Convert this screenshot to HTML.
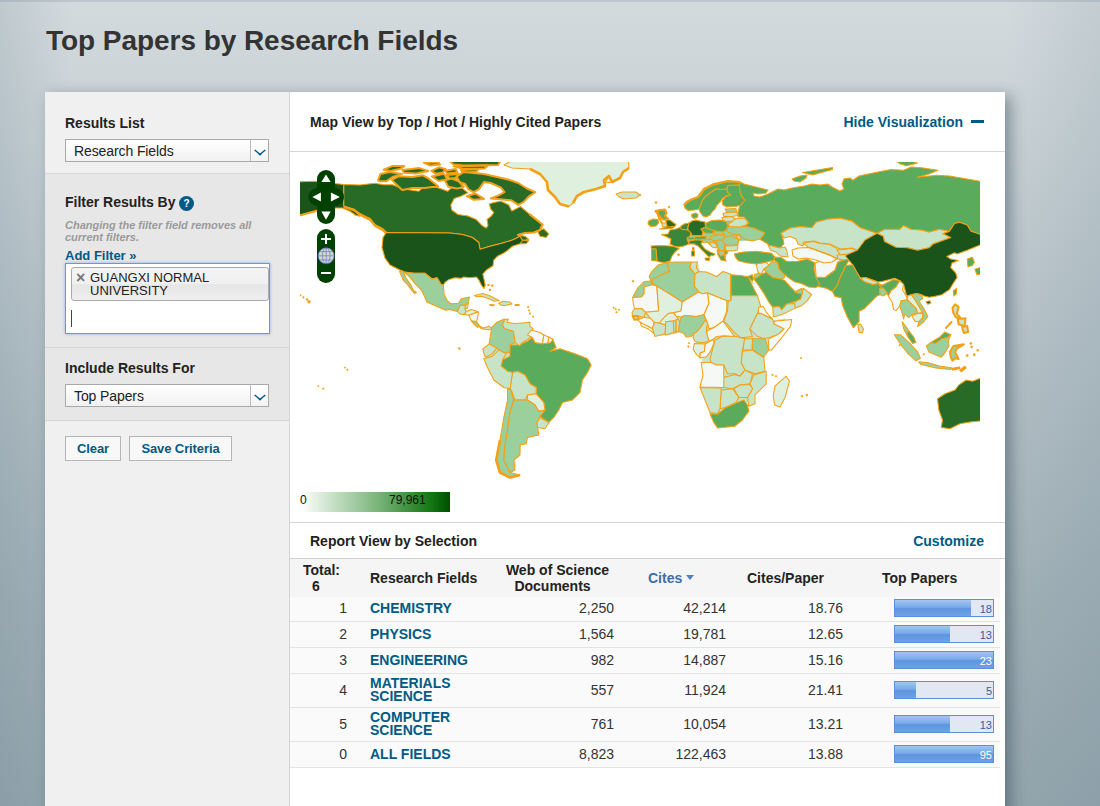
<!DOCTYPE html>
<html lang="en">
<head>
<meta charset="utf-8">
<title>Top Papers by Research Fields</title>
<style>
*{box-sizing:border-box;}
html,body{margin:0;padding:0;}
body{width:1100px;height:806px;overflow:hidden;position:relative;font-family:"Liberation Sans",Arial,sans-serif;color:#333;
 background:linear-gradient(to bottom,#d3dadd 0px,#c9d2d6 120px,#b4c0c6 350px,#a0afb6 600px,#93a4ac 806px);}
body:before{content:"";position:absolute;left:0;top:0;width:1100px;height:806px;background:linear-gradient(to right,rgba(110,135,150,.20) 0,rgba(110,135,150,0) 70px,rgba(110,135,150,0) 1010px,rgba(110,135,150,.16) 1100px);}
body:after{content:"";position:absolute;left:0;top:0;width:1100px;height:2px;background:rgba(90,110,125,.18);}
h1{position:absolute;left:46px;top:24px;margin:0;font-size:28px;line-height:34px;font-weight:bold;color:#333;white-space:nowrap;letter-spacing:-0.05px;}
#panel{position:absolute;left:45px;top:92px;width:960px;height:760px;background:#fff;box-shadow:6px 4px 14px rgba(40,60,75,.45);}
#side{position:absolute;left:0;top:0;width:245px;height:760px;background:#f0f0f0;border-right:1px solid #d4d4d4;}
.sec{position:absolute;left:0;width:244px;}
.lbl{position:absolute;left:20px;font-size:14px;font-weight:bold;color:#222;white-space:nowrap;line-height:16px;}
.sel{position:absolute;left:20px;width:204px;height:23px;border:1px solid #a9a9a9;background:linear-gradient(#fff,#f1f1f1);font-size:14px;line-height:23px;padding-left:8px;color:#222;letter-spacing:-0.1px;}
.sel i{position:absolute;right:0;top:0;width:18px;height:21px;border-left:1px solid #bbb;background:linear-gradient(#fff,#f3f3f3);}
.sel i svg{position:absolute;left:3px;top:9px;}
.btn{position:absolute;top:344px;height:25px;border:1px solid #b5b5b5;background:#f8f8f8;color:#005a84;font-size:13px;font-weight:bold;letter-spacing:-0.1px;line-height:24px;text-align:center;}
a{color:#005a84;text-decoration:none;}
#main{position:absolute;left:245px;top:0;width:715px;height:760px;}
.hd{position:absolute;left:20px;font-size:14px;font-weight:bold;color:#222;line-height:16px;white-space:nowrap;}
.hr{position:absolute;left:0;width:715px;height:1px;background:#d6d6d6;}
.lnk{position:absolute;font-size:14px;font-weight:bold;color:#005a84;line-height:16px;white-space:nowrap;}
table{position:absolute;left:0;top:467px;width:710px;border-collapse:collapse;font-size:14px;}
th{background:#f5f5f5;font-weight:bold;color:#222;height:38px;padding:0;line-height:16px;vertical-align:middle;}
td{background:#fafafa;border-bottom:1px solid #e3e3e3;padding:0;color:#333;vertical-align:middle;line-height:13px;}
td.n{text-align:right;padding-right:1px;}
td.f a{font-weight:bold;color:#005a84;}
.bar{position:relative;width:100px;height:18px;border:1px solid #5b8fd6;background:#e1e7f3;margin-left:50px;}
.bar b{position:absolute;left:0;top:0;bottom:0;background:linear-gradient(#a3c5f2 0%,#78a9e9 46%,#5e94de 54%,#6fa2e6 100%);}
.bar span{position:absolute;right:1px;top:2px;font-size:11px;line-height:14px;color:#3c5a9a;}
.bar span.w{color:#fff;}
</style>
</head>
<body>
<h1>Top Papers by Research Fields</h1>
<div id="panel">
 <div id="side">
  <div class="sec" style="top:81px;height:175px;background:#e7e7e7;border-top:1px solid #d6d6d6;border-bottom:1px solid #d6d6d6;"></div>
  <div class="sec" style="top:256px;height:73px;background:#e7e7e7;border-bottom:1px solid #d6d6d6;"></div>
  <div class="lbl" style="top:23px;">Results List</div>
  <div class="sel" style="top:47px;">Research Fields<i><svg width="12" height="7" viewBox="0 0 12 7"><path d="M0.7 1 Q3.5 3.2 6 5.6 Q8.5 3.2 11.3 1" fill="none" stroke="#005a84" stroke-width="1.5"/></svg></i></div>
  <div class="lbl" style="top:102px;">Filter Results By</div>
  <div style="position:absolute;left:134px;top:104px;width:15px;height:15px;border-radius:50%;background:#005a84;color:#fff;font-size:10px;font-weight:bold;line-height:15px;text-align:center;">?</div>
  <div style="position:absolute;left:20px;top:127px;font-size:11px;line-height:12px;font-style:italic;font-weight:bold;color:#9a9a9a;white-space:nowrap;">Changing the filter field removes all<br>current filters.</div>
  <a style="position:absolute;left:20px;top:156px;font-size:13px;line-height:16px;font-weight:bold;white-space:nowrap;">Add Filter »</a>
  <div style="position:absolute;left:20px;top:171px;width:205px;height:71px;background:#fff;border:1px solid #5b9bf0;box-shadow:0 0 3px rgba(80,140,240,.6);">
    <div style="position:absolute;left:5px;top:3px;width:198px;height:34px;border:1px solid #aaa;border-radius:3px;background:linear-gradient(#f4f4f4 0%,#f0f0f0 50%,#e6e6e6 52%,#eee 100%);font-size:13px;line-height:13px;color:#222;padding:3px 0 0 18px;">GUANGXI NORMAL<br>UNIVERSITY<span style="position:absolute;left:4px;top:3px;font-size:16px;line-height:14px;font-weight:bold;color:#777;">×</span></div>
    <div style="position:absolute;left:5px;top:46px;width:1px;height:17px;background:#444;"></div>
  </div>
  <div class="lbl" style="top:268px;">Include Results For</div>
  <div class="sel" style="top:292px;">Top Papers<i><svg width="12" height="7" viewBox="0 0 12 7"><path d="M0.7 1 Q3.5 3.2 6 5.6 Q8.5 3.2 11.3 1" fill="none" stroke="#005a84" stroke-width="1.5"/></svg></i></div>
  <div class="btn" style="left:20px;width:56px;">Clear</div>
  <div class="btn" style="left:84px;width:103px;">Save Criteria</div>
 </div>
 <div id="main">
  <div class="hd" style="top:22px;">Map View by Top / Hot / Highly Cited Papers</div>
  <div class="lnk" style="right:42px;top:22px;">Hide Visualization</div>
  <div style="position:absolute;left:681px;top:28px;width:13px;height:3px;background:#005a84;"></div>
  <div class="hr" style="top:59px;"></div>
  <!--MAP-->
  <div id="map" style="position:absolute;left:10px;top:70px;width:680px;height:320px;overflow:hidden;"><svg width="680" height="320" viewBox="300 162 680 320" style="position:absolute;left:0;top:0;"><style>.k{fill:#1b541b}.d{fill:#276b27}.e{fill:#3a873a}.m{fill:#5aac5c}.l{fill:#9bd09c}.p{fill:#c8e4c8}.v{fill:#dff0df}.w{fill:#f5f8f5}#ctry path{stroke:#f3a014;stroke-width:1.05;stroke-linejoin:round}#ctry .tk{stroke-width:2}#ctry .ns{stroke:none}</style><g id="ctry"><path class="p ns" d="M494.7,331.9 498.3,327.2 506.5,323.6 515.9,327.2 530,327.2 539.4,335.5 551.1,341.4 554.7,349.7 558.2,350.9 572.3,355.7 584,360.4 587.6,366.3 584,373.5 579.3,380.6 577,392.5 569.9,399.6 560.5,402 557,409.1 552.3,416.2 547.6,421 544.1,426.9 537,425.7 538.2,432.8 527.6,435.2 526.5,441.2 520.6,442.3 520.6,451.8 514.7,456.6 515.9,466.1 511.2,473.2 501.8,468.5 498.3,456.6 501.8,437.6 505.3,416.2 508.8,399.6 508.8,388.9 495.9,380.6 490,368.7 486.5,360.4 486.5,350.9 493.6,347.3 493.6,337.8Z"/>
<path class="l ns" d="M682.1,226.5 692.4,222.1 706.5,223.6 717.8,222.1 725.3,222.5 728.1,220.2 736.6,218.3 742.2,218.3 746.9,223.6 762,233.1 757.3,238.8 749.8,240.7 738.5,240.7 736.6,248.7 727.2,252.1 725.3,259.7 719.7,254 716.9,248 710.7,244.9 705.6,242.6 704.3,239.2 691.5,238.8 688.7,241.7 672.7,244.5 672.7,238.8 665.2,235 675.5,231.2Z"/>
<path class="p ns" d="M654.5,280.1 666.3,267 672.1,265.8 677.7,265.8 693.5,264.6 698.9,264.6 700,273.2 701,272.9 710.5,275.5 718.6,279.1 724.2,275.5 730,276.5 742.8,277.7 750.9,275.3 752.3,280.8 755.8,285 750,282.7 753.5,291 757,298.1 759.3,308.8 764,313.5 769.8,320.7 786,318.3 784.9,325.4 775.6,339.7 766.3,349.2 764.9,348.9 760.2,356.1 761.4,369.1 762.6,381 752.1,391.7 752.1,400 746.3,402.4 746.3,407.1 740.5,415.4 733.5,421.4 717.2,423 713.7,417.8 710.3,409.5 705.6,396.4 701,384.6 703.7,372.7 702.1,360.8 702.1,356.1 696.3,348.9 695.1,343 696.3,342 694,334.9 687.2,334.9 681.9,332.5 669.8,334.9 659.3,336.1 652.1,332.5 644,323 640.5,318.3 637.7,311.2 640.5,306.4 639.3,298.1 643.1,292.2 648.6,285Z"/>
<path class="k" d="M294,182 315,181.2 343.8,184.5 343.8,206.2 353.8,210 360,216.2 356.2,215.5 350,211.2 342.5,208 335,208 325,210 315,211.2 294,217Z"/>
<path class="d" d="M343.8,184.5 360,185 375,183.2 383.8,184.8 392.5,184.8 404,189 418.8,191.2 423,187.5 436,187 447.8,191.2 453.5,186.2 462.2,188.2 468,192.8 460.8,196.2 454.2,198.5 450.8,205 451.8,210 458,214.5 468,216 476.2,219.5 482,225.5 486.2,228 488,225.5 487,219.5 491.2,216.2 493.8,212.5 490.5,208.8 489.5,203.8 496.2,202 501.2,201.2 508.8,205 511.8,211 520.5,206.5 529.2,213.8 536.2,219.5 542.5,224.5 540,230 533.8,232.5 525,233 517.5,235 525,236.2 528.8,239.5 522.5,240.5 520,236.2 512.5,240 500,243.8 490,246.2 480,249.2 478.8,242.5 472.5,237.5 462.5,234.5 450,233 386.2,232.5 382.5,228.8 375,225 370,218.8 364.5,216.2 360,213.8 353.8,209.2 343.8,206.2Z"/>
<path class="d" d="M537.5,231.2 543.8,228.8 548.8,233.8 546.2,237.5 540,236.2Z"/>
<path class="d" d="M517.5,240 528.8,240.5 526.2,243.8 520,243.8Z"/>
<path class="k" d="M386.2,232.5 450,233 462.5,234.5 472.5,237.5 478.8,242.5 480,249.2 490,246.2 500,243.8 512.5,240 520,236.2 522.5,240.5 520,243.8 512.5,246.2 507.5,250.5 503.8,253 497.5,256.2 493.8,260 493,265.8 486.5,270 482.8,274 484,279 485.2,285.2 484,288.5 481.5,285.2 479,280.2 476.5,277 470,277.8 463.8,277 461.2,278.2 454.8,277.8 448.5,279.8 445.2,282.2 443.2,285.2 440.8,284 437,277.8 432,279 425,273.2 414,273.2 404,272 398.8,269.5 390,265 385,258 382,247.5 383,237.5Z"/>
<path class="m" d="M889.5,156 901,156 917.5,163.2 906.2,165.8 899.8,163.8Z"/>
<path class="p" d="M877,233.2 884.5,229.2 899.8,229.2 903.5,225.5 911.2,229.2 921.5,230 929,232 939.2,229.2 949.5,231.2 943,233.8 950.8,237.5 933,244 929,247.8 917.5,250.2 907.5,247.8 896,247.2 884.5,241.5 883.2,236.2Z"/>
<path class="m" d="M817.5,286.2 816.2,277.5 825,277.5 835,270 837.5,262.5 846.2,258.8 849,260.2 846.2,265 843.8,270.2 840,277.8 837.5,285.2 832.5,291.5 826.2,288.2Z"/>
<path class="w" d="M815,263 827.5,258.8 838.8,258 847.5,255.2 837.5,262.5 835,270 825,277.5 816.2,277Z"/>
<path class="m" d="M510,345 518.8,345 527.5,341.2 532.5,337.5 535,342.5 540,343.8 550,342.5 552.5,338.8 556.2,347.5 550,351.2 560,348.8 575,353.8 587.5,358.8 591.2,365 587.5,372.5 582.5,380 580,392.5 572.5,400 562.5,402.5 558.8,410 553.8,417.5 548.8,422.5 540,416.2 545,410 543.8,402.5 536.2,395 536.2,387.5 530,383.8 525,375 517.5,371.2 512.5,372.5 507.5,371.2 501.2,366.2 502.5,360 510,356.2Z"/>
<path class="p" d="M512.5,372.5 517.5,371.2 525,375 530,383.8 536.2,387.5 536.2,393.8 527.5,395 525,400 515,400 511.2,390 510,388.8Z"/>
<path class="v" d="M527.5,395 536.2,393.8 543.8,402.5 545,410 538.8,411.2 535,405 527.5,400Z"/>
<path class="l" d="M507.5,388.8 511.2,390 513.8,400 510,412.5 507.5,430 505,445 503.8,460 510,472.5 520,475 510,477.5 500,472.5 496.2,460 500,440 503.8,417.5 507.5,400Z"/>
<path class="l" d="M515,400 525,400 527.5,400 535,405 538.8,411.2 545,410 540,416.2 537,422.5 538.8,435 527.5,437.5 526.2,443.8 520,445 520,455 513.8,460 515,470 510,472.5 503.8,460 505,445 507.5,430 510,412.5 513.8,400Z"/>
<path class="p" d="M540,417.5 548.8,422.5 545,428.8 537.5,427.5 537,422.5Z"/>
<path class="p" d="M710,358.8 715,340 722.5,336.2 735,336.2 745,338.8 742.5,350 741.2,362.5 745,370 740,376.2 735,373.8 727.5,373.8 723.8,365 716.2,365 711.2,362.5Z"/>
<path class="w" d="M701.2,362.5 711.2,362.5 716.2,365 723.8,365 723.8,376.2 727.5,377.5 723.8,387.5 700,387 703,375Z"/>
<path class="p" d="M723.8,377.5 735,374.5 740,376.2 745,370 752.5,373.8 750,383.8 740,385 732.5,388.8 723.8,387.5Z"/>
<path class="p" d="M742.5,351.2 752.5,350 763.8,357.5 765,371.2 755,373.8 745,370 741.2,362.5Z"/>
<path class="l" d="M752.5,338.8 765,338.8 768.8,350 763.8,357 752.5,350Z"/>
<path class="p" d="M744.5,338.8 752.5,338.8 752,350 743,350Z"/>
<path class="p" d="M753.8,375 766.2,371.2 766.2,383.8 755,395 755,403.8 748.8,406.2 747.5,397.5 752.5,388.8 750,383.8Z"/>
<path class="p" d="M733.8,388.8 740,385 750,384.5 752.5,388.8 747.5,397.5 738.8,397.5Z"/>
<path class="p" d="M721.2,390 732.5,388.8 738.8,397.5 736.2,402.5 725,407.5 720,408.8Z"/>
<path class="p" d="M700,387.5 721.2,388 721.2,390 720,408.8 717.5,413.8 710,412.5 705,400Z"/>
<path class="m" d="M710,413.8 717.5,414.2 725,408 736.2,403 743.8,400 747.5,405 748.8,411.2 742.5,420 735,426.2 717.5,428 713.8,422.5Z"/>
<path class="v" d="M775,386.2 786.2,376.2 789.5,381.2 785,397.5 780,407 774.5,405 773.2,395Z"/>
<path class="d" d="M937.5,398.8 945,393.8 955,390 958.8,385 966.2,380 972.5,381.2 986,376.2 986,420.5 970,422 960,423.8 950,428.8 941.2,427.5 942.5,420 938.8,410Z"/>
<path class="e" d="M705,258 710,258 709,260.6 705.6,260Z"/>
<path class="l" d="M727,231.4 728,226.6 744,226 754,228 765,233 760,239 752,241 744,239 740,235 732,234Z"/>
<path class="m" d="M717,250 726,250.6 728,253 724,255 726,261 721,260 718,255Z"/>
<path class="p" d="M781,233 790,228 800,226.6 812,227.4 816,222 828,219 840,218 852,221 860,227.5 877,233.2 865,240.2 857.8,250.2 852,248 840,249 830,244 820,243 814,241 804,242 803,246 798,244 796,239 790,236.6 784,238Z"/>
<path class="p" d="M803,243 814,241.4 820,243.4 830,244.6 838,249.4 848,250 848,254 840,255 838,259 830,255 822,252 814,249 808,247Z"/>
<path class="w" d="M792,250 798,248 808,247.4 814,249.4 822,252.6 830,255.4 837,259 832,262 824,263 816,260 806,258 798,259 793,256Z"/>
<path class="p" d="M837,250 852,248.6 858,251 848,254 840,254.6Z"/>
<path class="p" d="M837,255 848,254.6 853,258 844,260 838,259Z"/>
<path class="m" d="M792,179 800,176 807,175 806,178 800,182 794,181Z"/>
<path class="m" d="M802.5,172.5 832.5,167.5 832.5,169.5 812.5,175Z"/>
<path class="m" d="M738,186 740,182 744,184 752,186 768,190 766,193 758,194 753,193 754,196 760,197 768,194 778,189 784,190 792,188 804,186 812,184 820,185 828,184 832,187 840,191 844,189 842,184 844,179 850,178 852.8,180.2 859,176 874.2,172.8 891,169.5 903.5,170.2 911.2,167 921.5,167.8 938,170.2 929,174 917.5,177.2 936.8,175.2 949.5,176 967.2,179 986,182.2 986,236.2 971,231.2 967.2,225 959.5,222.2 954.5,223.5 949.5,231.2 939.2,229.2 929,232 921.5,230 911.2,229.2 903.5,225.5 899.8,229.2 884.5,229.2 877,233.2 860,227.5 852,221 840,218 828,219 816,222 812,227.4 800,226.6 790,228 781,233 783,239 784,244 780,248 768,245 768,244 760,239.4 765,233 754,228 744,226 749,223 744,217 738,217 738,212 740,205 744,200 740,193Z"/>
<path class="v" d="M520,156 628,156 629,168 623,172 620,178 612,182 605,183 609,176 604,180 605,186 596,189 584,192 577,196 573,203 569,206.4 560,204 555,197 548,190 547,182 540,174 530,169 512,168 504,165Z"/>
<path class="p" d="M616,194 622,192 636,192 640,195 636,198 624,199 619,197Z"/>
<path class="p" d="M768,245 780,248 785,247 787,251 788,257 780,256 776,252 771,250.6Z"/>
<path class="d tk" d="M378,180.3 380.5,173.9 390,172.1 402,173.9 393.4,176.6 386.5,181.2 379.7,181.2Z"/>
<path class="d tk" d="M383.6,169.7 392.1,166.1 404.2,166.1 400.7,168.8 390.4,171Z"/>
<path class="d tk" d="M391.9,179.9 398.8,176.2 412.5,177.1 422.8,175.3 427.9,178 434.8,183.5 438.2,186.2 424.5,188 412.5,188 402.2,189.9 395.3,183.5Z"/>
<path class="d tk" d="M402.3,170 419.5,168.1 428.1,170.9 416,173.6 404,172.7Z"/>
<path class="d tk" d="M423.8,162.7 438.4,162.3 440.1,164.5 429.8,165.4Z"/>
<path class="d tk" d="M431.3,170.9 439,167.3 445.9,169.1 442.5,172.8 435.6,173.7Z"/>
<path class="d tk" d="M431.9,176.5 443.9,173.8 447.3,179.2 438.7,181Z"/>
<path class="d tk" d="M443.3,156 503.3,156 498.2,164.9 463.9,165.6 453.6,164.5Z"/>
<path class="d tk" d="M453.6,166.4 487.9,165.4 484.5,168.4 463.9,169.1Z"/>
<path class="d tk" d="M461,170 478.1,169.3 476.4,171.8 462.7,172.9Z"/>
<path class="d tk" d="M445.4,170.8 455.7,169 457.4,172.6 447.1,173.5Z"/>
<path class="d tk" d="M446.5,175 458.6,174.1 462,176.9 450,178.7Z"/>
<path class="d tk" d="M444.9,180.4 451.7,178.6 458.6,181.3 463.8,186.8 456.9,188.6 448.3,186.8Z"/>
<path class="d tk" d="M456.5,176.7 463.3,172.1 473.6,173 483.9,174 496,176.7 508,179.4 518.3,183 526.9,188.5 535.4,192.1 528.6,196.7 523.4,202.1 518.3,204.9 511.4,200.3 502.8,199.4 490.8,198.5 497.7,195.8 504.5,192.1 501.1,187.6 490.8,183 483.9,182.1 478.8,189.4 473.6,192.1 468.5,189.4 465.1,184 459.9,182.1Z"/>
<path class="d tk" d="M466.8,196.2 475.4,193.5 484,198.9 473.7,199.8Z"/>
<path class="m" d="M731,274.8 740.9,275.5 747.3,276.7 752.4,274.8 753.6,278.6 752.4,281.2 748.5,277.4 751.1,283.1 754.9,290.7 757.5,295.8 731,295.6Z"/>
<path class="l" d="M754.3,274.8 758.7,272.9 761.3,274.2 757.5,277.4 754.9,278.6Z"/>
<path class="v" d="M756.2,264 766.4,262.1 768.9,265.3 763.8,269.1 761.3,274.2 758.7,272.9 757.5,270.4Z"/>
<path class="l" d="M763.8,269.1 768.9,265.3 771.5,261.5 777.8,262.7 779.1,269.1 784.2,274.2 784.8,277.4 781.6,279.3 772.7,277.4 766.4,272.3Z"/>
<path class="m" d="M774.6,257 781.6,257.6 786.7,261.5 796.9,261.5 807.1,258.9 814.7,262.7 814.1,269.1 816,277.4 819.8,284.4 816,287.5 808.4,286.9 802,283.7 794.4,281.8 788,277.4 784.2,274.2 779.1,269.1 777.8,262.7 774,260.2Z"/>
<path class="m" d="M734.5,253.8 743.5,251.9 756.2,251.3 771.5,253.2 774.6,257 774,260.2 766.4,262.1 756.2,264 746,262.7 738.4,260.8 735.2,257Z"/>
<path class="m" d="M754.3,278.6 757.5,277.4 761.3,274.2 766.4,272.3 772.7,277.4 781.6,279.3 784.8,280.5 790.5,286.9 795.6,292 802,293.9 800.7,299 795.6,301.5 786.7,304.1 781.6,309.8 779.1,306.6 772.7,307.3 768.9,302.2 763.8,293.3 758.7,285.6 754.9,280.5Z"/>
<path class="p" d="M772.7,307.3 779.1,306.6 781.6,309.8 786.7,304.1 794.4,303.5 795.6,307.9 786.7,312.4 779.1,315.5 773.4,316.8Z"/>
<path class="p" d="M795.6,301.5 800.7,299 802,293.9 803.3,288.2 811.5,294.5 807.1,300.9 802,305.4 795.6,307.9 794.4,303.5Z"/>
<path class="l" d="M794.4,292 802,288.2 802.6,293.9 795.6,292.6Z"/>
<path class="p" d="M731,295.6 757.5,295.8 760.6,306 757.5,313.6 753.6,321.3 749.8,328.9 752.4,336.5 740.9,337.8 734.5,332.7 726.9,323.8 723.7,321.3 727.5,311.1 728.2,300.9 731,300.3Z"/>
<path class="w" d="M758.7,307.3 763.2,306.6 766.4,312.4 772.7,319.4 768.9,317.5 761.3,313.6 758.1,313Z"/>
<path class="p" d="M753.6,321.3 757.5,313.6 761.3,313.6 768.9,317.5 772.7,319.4 774,323.8 784.2,328.9 777.8,334.6 768.9,337.8 763.8,338.5 757.5,336.5 752.4,331.5 749.8,328.9Z"/>
<path class="w" d="M774,321.3 791.8,319.4 790.5,326.4 781.6,337.8 771.5,349.9 768.9,350 768.3,339.1 777.8,334.6 784.2,328.9 774,323.8Z"/>
<path class="k" d="M846.2,255 857.5,250 865,240 877,233.2 883.2,236.2 884.5,241.5 896,247.2 907.5,247.8 917.5,250.2 929,247.8 933,244 950.8,237.5 943,233.8 949.5,231.2 954.5,223.5 959.5,222.2 967.2,225 971,231.2 986,236.2 986,245 986,242.5 967.3,250.2 957.1,254 954.5,252.7 946.9,256.5 950.7,259.1 958.4,260.4 952,262.9 950.7,267.4 955.8,273.1 957.1,277.5 953.3,283.3 949.5,289.6 941.8,294.7 934.2,296.6 929.1,297.3 924,296 921.5,294.7 916.4,293.5 911.3,294.7 907.5,296 906.2,294.7 903.6,284.5 899.8,280.7 894.7,278.2 882,281.4 878.2,282 865.5,277.5 860.4,278.2 856.5,271.8 852.7,264.8 845.7,256.5Z"/>
<path class="m" d="M845.7,265.5 852.7,264.8 856.5,271.8 860.4,278.2 864.2,281.4 873.1,284.5 878.2,283.3 882,288.4 879.5,288.4 880.1,294.7 876.9,296 871.8,301.1 864.2,308.7 859.1,311.3 859.1,321.5 853.4,327.8 847.6,317.6 842.5,305.3 841.3,297.8 835,296.5 832.5,291.5 837.5,285.2 840,277.8 843.7,270.3Z"/>
<path class="m" d="M878.2,283.3 882,285.2 893.5,279.5 899.8,280.7 896,287.1 890.9,290.9 888.4,296 885.8,290.9 882,288.4Z"/>
<path class="l" d="M879.5,288.4 883.3,287.7 887.1,293.5 883.3,296 880.1,294.7Z"/>
<path class="p" d="M860.4,278.2 865.5,277.5 878.2,282.6 878.2,283.3 873.1,284.5 864.2,281.4Z"/>
<path class="w" d="M888.4,296 890.9,290.9 896,287.1 899.8,280.7 903.6,284.5 902.4,289.6 906.2,296 907.5,299.8 901.1,301.1 899.8,306.2 896,310.6 893.5,309.4 892.2,302.4Z"/>
<path class="l" d="M901.1,301.1 907.5,299.8 911.3,303.6 916.4,308.7 917.6,313.2 911.3,315.1 908.7,317.6 904.9,313.8 903.6,318.9 902.4,313.8 899.8,306.2Z"/>
<path class="v" d="M907.5,296 911.3,294.7 915.1,299.8 918.9,306.2 922.7,312.5 917.6,313.2 916.4,308.7 911.3,303.6 907.5,299.8Z"/>
<path class="l" d="M911.3,294.7 916.4,293.5 921.5,294.7 922.7,298.5 918.9,301.1 924,308.7 927.8,316.4 924,321.5 917.6,326.5 918.9,321.5 922.7,317.6 922.7,312.5 918.9,306.2 915.1,299.8Z"/>
<path class="v" d="M911.9,315.7 917.6,313.6 922.7,313.2 922.7,317.6 918.9,321.5 915.1,321.5Z"/>
<path class="k" d="M925.9,301.7 929.7,300.8 931,303 927.8,304.3Z"/>
<path class="m" d="M953.3,290.9 956.5,288.4 956.5,293.5 953.9,296Z"/>
<path class="m" d="M967.3,259.1 972.4,257.2 974.3,262.3 972.4,265.5 967.9,266.7Z"/>
<path class="m" d="M974.9,269.3 986,265.5 986,274.4 976.8,274.4Z"/>
<path class="p" d="M857.8,324.6 860.4,324 863.5,329.1 862.3,332.9 859.1,332.3Z"/>
<path class="l" d="M403.9,272 414.1,273.3 424.9,273.3 431.9,279 437,277.7 440.8,284.1 443.4,285.4 444,294.3 447.2,300.6 451,303.8 458.6,303.2 461.2,298.7 469.5,297.1 468.2,303.2 465.6,304.5 459.9,305.7 457.4,311.5 449.7,309.5 445.9,310.2 437,306.4 426.8,301.9 425.5,298.7 421.7,290.5 415.4,284.1 410.3,277.7 407.1,274.5Z"/>
<path class="l" d="M399.5,271.4 402.6,270.7 405.8,277.7 410.3,284.1 413.5,290.5 416.6,292.4 414.7,293.6 410.9,289.2 407.1,284.1 403.3,280.3Z"/>
<path class="p" d="M457.4,311.5 459.9,305.7 465.6,305.1 465,308.9 466.3,311.5 463.7,314.6 459.9,314Z"/>
<path class="p" d="M465.6,305.1 468.2,303.2 467.5,308.3 465,308.9Z"/>
<path class="v" d="M466.3,311.5 471.4,309.5 477.7,311.5 473.9,313.4 468.8,315.3 464.4,314.6Z"/>
<path class="w" d="M468.8,315.3 473.9,313.4 478.4,311.8 477.7,317.2 476.5,321.6 471.4,321Z"/>
<path class="l" d="M471.4,321 476.5,321.6 479.6,326.1 477.7,327.4 473.9,324.2Z"/>
<path class="p" d="M479,326.1 484.1,328 489.2,326.1 491.7,328.6 489.2,329.9 484.1,329.3 480.3,328Z"/>
<path class="p" d="M474.5,295.5 482.8,293.6 489.2,295.5 495.5,298.7 499.4,300.6 494.3,301.3 489.2,298.7 481.5,296.2 476.5,296.8Z"/>
<path class="p" d="M498.7,303.2 503.2,301.3 509.5,301.9 512.1,303.8 507,305.1 504.5,305.7 500.6,305.1Z"/>
<path class="p" d="M489.8,304.5 494.3,304.7 493.6,305.7 490.2,305.5Z"/>
<path class="p" d="M515.3,304.5 519.1,304.5 519.1,305.5 515.3,305.5Z"/>
<path class="p" d="M487.9,284.5 489.2,284.5 489.2,285.4 487.9,285.4Z"/>
<path class="p" d="M491.7,285.1 493,285.1 493,286.1 491.7,286.1Z"/>
<path class="p" d="M489.4,289.2 490.5,289.2 490.5,290.5 489.4,290.5Z"/>
<path class="p" d="M527.7,306.7 528.5,306.7 528.5,307.5 527.7,307.5Z"/>
<path class="p" d="M528.6,309.9 529.4,309.9 529.4,310.7 528.6,310.7Z"/>
<path class="p" d="M529.7,313.1 530.4,313.1 530.4,313.9 529.7,313.9Z"/>
<path class="p" d="M532.7,316.2 533.5,316.2 533.5,316.9 532.7,316.9Z"/>
<path class="p" d="M458.9,347.7 459.9,347.7 459.9,349.3 458.9,349.3Z"/>
<path class="l" d="M491.7,327.4 496.8,322.3 504.5,319.1 505.7,321.6 502.5,324.8 504.5,328.6 513.4,331.2 515.3,342.6 510.2,344.5 509.5,352.8 503.2,352.8 496.8,348.4 489.2,343.9 490.5,335Z"/>
<path class="p" d="M504.5,319.7 508.3,319.1 507,322.3 514.6,323.5 522.3,322.9 529.9,322.3 529.9,326.1 533.1,328.6 529.9,333.7 531.2,336.9 522.3,342.6 519.7,345.8 515.3,342.6 513.4,331.2 504.5,328.6 502.5,324.8Z"/>
<path class="p" d="M482.8,349 489.2,343.9 496.8,348.4 491.7,354.1 485.4,357.3 484.1,354.1Z"/>
<path class="w" d="M531.2,330 540,332.5 543.8,335 542.5,343.8 535,342.5 532.5,337.5 527.5,335Z"/>
<path class="w" d="M543.8,335 548.8,337 548,343 542.5,343.8Z"/>
<path class="w" d="M548.8,337 553,339.5 550,343 548,343Z"/>
<path class="p" d="M483.8,358.8 492.5,356.2 498.8,350 506.2,353.8 502.5,360 501.2,366.2 507.5,371.2 512.5,372.5 510,388.8 503.8,387.5 493.8,380 487.5,367.5Z"/>
<path class="l" d="M649.2,276.5 651.7,271.5 658.1,265.1 667,262.5 669.5,271.5 663.2,274 653,279.1 651.1,281Z"/>
<path class="l" d="M632.6,297.5 637.7,288 644.1,281.6 651.1,281 652.4,284.8 644.1,286.7 644.1,293.7 641.5,296.9Z"/>
<path class="l" d="M667,262.5 675.9,261.9 691.2,261.9 689.9,267.6 695,274 694.4,286.1 698.8,291.8 682.3,302 678.5,299.5 656.8,286.1 652.4,283.5 653,279.1 663.2,274 669.5,271.5Z"/>
<path class="p" d="M691.2,261.9 697.5,261.9 696.3,267.6 698.8,271.5 695,274 689.9,267.6Z"/>
<path class="p" d="M695,274 698.8,271.5 706.5,272.1 716.6,276.5 723,271.5 730.6,274 730.6,300.7 726.8,300.7 707.7,293.1 701.4,293.7 698.8,291.8 694.4,286.1Z"/>
<path class="w" d="M632.6,297.5 641.5,296.9 644.1,293.7 644.1,286.7 652.4,284.8 656.8,286.1 658.7,310.9 645.4,312.2 641.5,308.4 634.5,309 633.3,303.3Z"/>
<path class="v" d="M656.8,286.1 678.5,299.5 682.3,302 681,310.9 673.4,312.8 668.3,313.5 663.2,318.5 659.4,323 654.3,322.4 650.5,318.5 645.4,312.2 658.7,310.9Z"/>
<path class="w" d="M682.3,302 698.8,291.8 701.4,293.7 707.7,293.1 709,303.3 703.9,314.7 696.3,316.6 684.8,315.4 681,317.3 675.9,316 673.4,312.8 681,310.9Z"/>
<path class="w" d="M707.7,293.1 726.8,300.7 726.8,310.9 723,321.1 714.1,327.5 709,328.7 707.7,323.6 703.9,314.7 709,303.3Z"/>
<path class="p" d="M632,312.2 634.5,309 641.5,308.4 645.4,312.2 644.1,317.3 637.7,316 632.6,316Z"/>
<path class="p tk" d="M632.6,316 637.7,316 639,319.2 634.5,319.8Z"/>
<path class="w" d="M637.7,319.8 644.1,317.3 650.5,318.5 654.3,322.4 652.4,328.7 647.9,326.2 642.8,324.9 640.3,322.4Z"/>
<path class="w" d="M640.3,322.4 647.9,326.2 652.4,328.7 654.3,333.8 647.9,328.7 641.5,326.2Z"/>
<path class="p" d="M654.3,322.4 659.4,323 665.7,324.9 665.1,333.8 654.9,336.4 652.4,328.7Z"/>
<path class="v" d="M659.4,323 663.2,318.5 668.3,313.5 673.4,312.8 675.9,316 678.5,319.2 673.4,321.1 665.7,321.7 665.7,324.9Z"/>
<path class="p" d="M665.7,321.7 673.4,321.1 674,332.5 665.7,335.1 665.1,333.8 665.7,324.9Z"/>
<path class="p" d="M673.4,321.1 678.5,319.2 679.7,322.4 678.5,331.3 674,332.5Z"/>
<path class="p" d="M675.7,321.3 676.2,321.3 676.2,331.9 675.7,331.9Z"/>
<path class="l" d="M679.7,322.4 681,317.3 684.8,315.4 696.3,316.6 703.9,314.7 705.8,319.8 701.4,326.2 697.5,331.3 693.7,333.8 691.2,336.4 686.1,337 683.5,333.2 678.5,331.3Z"/>
<path class="p" d="M693.7,333.8 697.5,331.3 701.4,326.2 705.8,319.8 707.7,323.6 706.5,327.5 706.5,331.3 709,341.5 701.4,342.7 695,341.5 693.1,337.6Z"/>
<path class="w" d="M706.5,331.3 714.1,327.5 723,321.1 726.8,326.2 734.5,336.4 724.3,335.7 716.6,336.4 712.8,339.5 709,341.5Z"/>
<path class="v" d="M694.4,343.4 705.2,344 704.5,351.6 700.1,352.9 700.1,358 696.3,354.2 693.1,349.1Z"/>
<path class="w" d="M705.2,344 712.8,339.5 714.1,342.7 710.3,351.6 706.5,356.7 700.1,358 700.1,352.9 704.5,351.6Z"/>
<path class="l" d="M902.1,321.7 905.6,326.1 909.1,331.3 907.3,332.1 908.2,337.3 903.9,329.5Z"/>
<path class="m" d="M907.3,332.1 909.1,331.3 913.4,336.5 916,342.5 912.5,343.4 908.2,337.3Z"/>
<path class="l" d="M894.3,334.7 900.4,334.7 909.9,343.4 917.8,352.1 920.4,358.2 916,360.8 908.2,353.8 901.3,345.2Z"/>
<path class="l" d="M918.6,361.7 927.3,362.5 939.5,366 951.6,367.7 950.8,369.5 936,368.1 920.4,364.3Z"/>
<path class="l tk" d="M952.5,368.8 959.4,367.4 959.4,368.3 952.8,369.6Z"/>
<path class="l tk" d="M960.3,370.3 964.7,366.9 965.5,367.7 961.4,371.2Z"/>
<path class="l" d="M926.4,346 930.8,342.5 935.1,343.4 941.2,339.1 947.3,337.3 950.8,334.7 948.2,340.8 949,346 945.5,352.1 941.2,357.3 935.1,354.7 929,352.1Z"/>
<path class="m" d="M930.8,342.5 939.5,337.3 944.7,332.1 950.8,334.7 947.3,337.3 941.2,339.1 935.1,343.4Z"/>
<path class="l tk" d="M949.9,352.1 953.4,346 963.8,344.3 956.8,348.6 955.1,352.1 958.6,359 955.1,358.2 952.5,360.8 950.8,357.3Z"/>
<path class="p tk" d="M952.5,307.8 955.1,304.3 958.6,306.9 956.8,313.9 960.3,317.4 956,317.4 953.4,313Z"/>
<path class="p tk" d="M957.7,319.1 965.5,318.2 964.7,326.1 958.6,324.3Z"/>
<path class="p tk" d="M962,326.9 967.3,326.1 968.1,332.1 963.8,333Z"/>
<path class="p" d="M945.5,327.8 951.3,321.4 952,322.1 946.2,328.5Z"/>
<path class="m" d="M684,204 687,201 692,199.5 700,196 704,190 710,186 718,184 726,182 736,181.5 740,183 739,185 728,185.5 727,189 722,189.5 716,189 710,193 705,197 702,201 701,205 699,209 694,210 688,210.5 685,208Z"/>
<path class="m" d="M701,205 702,201 705,197 710,193 716,189 722,189.5 727,189 728,193 731,195 726,196 722,199 720,202 717,205 715,209 712,212 710,215 706,217 703,216 700,212 699,209Z"/>
<path class="m" d="M728,185.5 739,185 740,192 742,197 745,200 741,205 736,206.5 727,207 723,205 722,201 726,196.5 731,195 728,193 727,189Z"/>
<path class="m" d="M691.5,214.5 695.5,213 698,214.5 697.5,217.5 694,218.5 692,217Z"/>
<path class="m tk" d="M655.5,211 660,210 665,209.5 666.5,213 665,216 668,218.5 667,220 663,219.5 660,217 658,214Z"/>
<path class="d" d="M666.2,219.8 670,220 673.5,222.8 676,224.5 674.5,226.8 670,227.8 666.2,227.2 665.8,224Z"/>
<path class="p" d="M661.5,223 666.5,223 667,226.5 663,227Z"/>
<path class="e" d="M659.5,229 666.5,227 674,226.5 673,228 665,229Z"/>
<path class="m" d="M648.5,221 653,219 658,219.5 658.5,223 656,226 651,226.5 648,224Z"/>
<path class="e" d="M680,227 684,224 689,223 688,227 687,230 682,229.5Z"/>
<path class="d" d="M689,223 692,221 696,220 700,221 705,222 705.5,227 701,229 703,232 702,235.5 692,235.5 691,233 688,230 688,227Z"/>
<path class="e" d="M661.5,234.5 668,234 670,230 676,229 680,227.5 682,229.5 687,230 688,230 691,233 690,236 687,239 689,244 684,246 679,247 674,246 670,244 671,239 667,237Z"/>
<path class="e" d="M651,246 660,245.5 670,246 674,246.5 679,248.5 675,252 672,256 670,261 665,262.5 660,262 657,261 656,249 651.5,249Z"/>
<path class="m" d="M651.5,249 656,249 657,261 651.5,260.5Z"/>
<path class="m" d="M687,237.5 694,237 694.5,239.5 689,240Z"/>
<path class="m" d="M694.5,237 702,236 707,236.5 705,239 699,240 694.5,239.5Z"/>
<path class="e" d="M689,241 694.5,240 700,240 703,241 701,244 705,249 710,252 715,254 713,256 712,255 709,257 704,252 704,252 698,246 694,244 689,244Z"/>
<path class="e" d="M691.5,251 694.5,251 694.5,256 691.5,256Z"/>
<path class="e" d="M692.5,247.5 694,247.5 694,250 692.5,250Z"/>
<path class="m" d="M706,223 712,220.5 720,220 726,221.5 728,226 726,230 723,232 716,231 710,229.5 705.5,227Z"/>
<path class="m" d="M701,229 705.5,227.5 710,229.5 714.5,231 712,233.5 705,233Z"/>
<path class="l" d="M712,233.5 716,231.5 723,232 724,234.5 718,235Z"/>
<path class="l" d="M710,236.5 718,235 724,234.5 725,237 722,240 714,241 710,239Z"/>
<path class="l" d="M702,240 710,239 714,241 717,244 714,246 710,245 708,242 703,242.5Z"/>
<path class="p" d="M709,243 714,242.5 717,245 716,248 712,247Z"/>
<path class="l" d="M717,240 723,240 725,244 724,250 720,251 718,247 717,244Z"/>
<path class="l" d="M722,240 725,237 732,235.5 736,238 739,240 738,244 733,245.5 727,245 725,244Z"/>
<path class="p" d="M736,236 739,235 741,239 739,240Z"/>
<path class="p" d="M725,246 733,245.8 738,245 737.5,250 732,251 726,250.5Z"/>
<path class="l" d="M718,251 724,250.5 725,254 721,256 719,254Z"/>
<path class="l" d="M725,209 736,208.5 736.5,212 727,212.5Z"/>
<path class="p" d="M723,213.5 727,212.5 736.5,212 738,215.5 732,216.5 724,216.5Z"/>
<path class="p" d="M722,217.5 732,216.5 735,219 733,221 726,221.5 722.5,220Z"/>
<path class="p" d="M728,224 733,221 735,219 744,218 748,222 746,225 740,227 730,226.5Z"/>
<path d="M343.8,206.8 353.8,210 360,214.5 370,219.5 375,225.5 382.5,229.5 386.2,233" fill="none" style="stroke-width:2.6"/>
<path d="M294,217 315,211.2 325,210 335,208" fill="none" style="stroke-width:2.2"/>
<path d="M530,169 540,174 547,182 548,190 555,197 560,204 569,206.4" fill="none" style="stroke-width:2.6"/>
<path d="M573,203 577,196 584,192 596,189 605,186 604,180 609,176 612,182 620,178 623,172 629,168" fill="none" style="stroke-width:2.6"/>
<path d="M684,205 690,200 698,197 704,189 714,184 728,181 740,182" fill="none" style="stroke-width:2.2"/>
<path d="M500,440 496.2,460 500,472.5 510,477.5 520,475" fill="none" style="stroke-width:2.6"/>
<path d="M529.2,213.8 536.2,219.5 542.5,224.5 540,230 533.8,232.5 525,233 517.5,235" fill="none" style="stroke-width:2.2"/>
<path d="M657,211 659,218 662,223" fill="none" style="stroke-width:2.2"/>
<circle cx="300.5" cy="295.4" r="0.7" fill="#f3a014" stroke="#f3a014" stroke-width=".6"/>
<circle cx="303.4" cy="297.4" r="0.8" fill="#f3a014" stroke="#f3a014" stroke-width=".6"/>
<circle cx="307" cy="299.4" r="1" fill="#f3a014" stroke="#f3a014" stroke-width=".6"/>
<circle cx="309" cy="301.8" r="1.4" fill="#f3a014" stroke="#f3a014" stroke-width=".6"/>
<circle cx="345" cy="367.6" r="0.7" fill="#f3a014" stroke="#f3a014" stroke-width=".6"/>
<circle cx="347.4" cy="369.8" r="0.8" fill="#f3a014" stroke="#f3a014" stroke-width=".6"/>
<circle cx="318.3" cy="386.2" r="0.6" fill="#f3a014" stroke="#f3a014" stroke-width=".6"/>
<circle cx="323.3" cy="388.7" r="0.8" fill="#f3a014" stroke="#f3a014" stroke-width=".6"/>
<circle cx="613.7" cy="307.8" r="0.7" fill="#f3a014" stroke="#f3a014" stroke-width=".6"/>
<circle cx="615.7" cy="309.3" r="0.7" fill="#f3a014" stroke="#f3a014" stroke-width=".6"/>
<circle cx="619" cy="309.8" r="0.7" fill="#f3a014" stroke="#f3a014" stroke-width=".6"/>
<circle cx="616.5" cy="312.3" r="0.8" fill="#f3a014" stroke="#f3a014" stroke-width=".6"/>
<circle cx="633" cy="281.2" r="0.9" fill="#f3a014" stroke="#f3a014" stroke-width=".6"/>
<circle cx="689" cy="343.3" r="0.7" fill="#f3a014" stroke="#f3a014" stroke-width=".6"/>
<circle cx="688.4" cy="346.5" r="0.8" fill="#f3a014" stroke="#f3a014" stroke-width=".6"/>
<circle cx="772.5" cy="375" r="0.8" fill="#f3a014" stroke="#f3a014" stroke-width=".6"/>
<circle cx="776" cy="376.3" r="0.8" fill="#f3a014" stroke="#f3a014" stroke-width=".6"/>
<circle cx="802" cy="396.2" r="0.9" fill="#f3a014" stroke="#f3a014" stroke-width=".6"/>
<circle cx="806.8" cy="395" r="0.9" fill="#f3a014" stroke="#f3a014" stroke-width=".6"/>
<circle cx="801" cy="358" r="0.7" fill="#f3a014" stroke="#f3a014" stroke-width=".6"/>
<circle cx="970.7294199374783" cy="343.41785342132687" r="1" fill="#f3a014" stroke="#f3a014" stroke-width=".6"/>
<circle cx="971.5977770059048" cy="346.891281695033" r="1" fill="#f3a014" stroke="#f3a014" stroke-width=".6"/>
<circle cx="967.2559916637722" cy="355.57485237929836" r="1.1" fill="#f3a014" stroke="#f3a014" stroke-width=".6"/>
<circle cx="974.2028482111845" cy="354.70649531087184" r="1.1" fill="#f3a014" stroke="#f3a014" stroke-width=".6"/>
<circle cx="977.6762764848906" cy="350.36470996873913" r="1" fill="#f3a014" stroke="#f3a014" stroke-width=".6"/>
<circle cx="923.8381382424453" cy="354.1854810698159" r="0.8" fill="#f3a014" stroke="#f3a014" stroke-width=".6"/>
<circle cx="899.5241403265022" cy="345.1545675581799" r="0.7" fill="#f3a014" stroke="#f3a014" stroke-width=".6"/>
<circle cx="656.0" cy="202.5" r="1" fill="#f3a014" stroke="#f3a014" stroke-width=".6"/>
<circle cx="669.0" cy="207.0" r="0.9" fill="#f3a014" stroke="#f3a014" stroke-width=".6"/>
<circle cx="678.5" cy="254.8" r="1" fill="#f3a014" stroke="#f3a014" stroke-width=".6"/>
<circle cx="640.3" cy="195" r="0.7" fill="#f3a014" stroke="#f3a014" stroke-width=".6"/></g><g id="ctl">
<rect x="317" y="170" width="18" height="54" rx="9" fill="#004000"/>
<rect x="308.5" y="188" width="35.5" height="18" rx="9" fill="#004000"/>
<rect x="317" y="229" width="18" height="54" rx="9" fill="#004000"/>
<path d="M326,174.5 L321.4,182 L330.7,182Z M326,219.7 L321.4,211.6 L330.7,211.6Z M312.4,196.9 L320.9,192.4 L320.9,201.6Z M339.9,196.9 L330.9,192.4 L330.9,201.6Z" fill="#fff"/>
<path d="M321,239 H331 M326,234 V244 M321,273 H331" stroke="#fff" stroke-width="2" fill="none"/>
<g fill="none" stroke="#5a5ad6" stroke-width="0.55"><circle cx="326.2" cy="255.8" r="8" fill="#fff" fill-opacity=".8"/><ellipse cx="326.2" cy="255.8" rx="3.8" ry="8"/><path d="M326.2,247.8 V263.8 M318.2,255.8 H334.2 M319.5,251.6 H332.9 M319.5,260 H332.9"/></g>
</g>
</svg></div><!--/MAP-->
  <div style="position:absolute;left:10px;top:400px;width:150px;height:20px;background:linear-gradient(to right,#fff 0%,#7fb87f 50%,#127512 88%,#004e00 100%);font-size:12px;line-height:14px;color:#111;">
    <span style="position:absolute;left:0;top:1px;">0</span><span style="position:absolute;left:89px;top:1px;">79,961</span>
  </div>
  <div class="hr" style="top:430px;"></div>
  <div class="hd" style="top:441px;">Report View by Selection</div>
  <div class="lnk" style="right:21px;top:441px;">Customize</div>
  <div class="hr" style="top:466px;background:#d0d0d0;"></div>
  <table>
   <colgroup><col style="width:63px"><col style="width:17px"><col style="width:135px"><col style="width:110px"><col style="width:112px"><col style="width:117px"><col style="width:156px"></colgroup>
   <tr><th style="text-align:center;padding-right:0;">Total:<br>6<span style="display:inline-block;width:11px;"></span></th><th></th><th style="text-align:left;">Research Fields</th><th style="text-align:center;padding-right:5px;">Web of Science<br>Documents<span style="display:inline-block;width:10px;"></span></th><th style="text-align:left;padding-left:33px;color:#3d6ea8;">Cites<svg width="8" height="5" viewBox="0 0 8 5" style="margin-left:4px;vertical-align:3px;"><path d="M0 0H8L4 5Z" fill="#4d82c4"/></svg></th><th style="text-align:left;padding-left:20px;">Cites/Paper</th><th style="text-align:left;padding-left:38px;">Top Papers</th></tr>
   <tr style="height:24px;"><td class="n" style="padding-right:6px;">1</td><td></td><td class="f"><a>CHEMISTRY</a></td><td class="n">2,250</td><td class="n">42,214</td><td class="n">18.76</td><td><div class="bar" style="top:-1px;"><b style="width:76px;"></b><span>18</span></div></td></tr>
   <tr style="height:26px;"><td class="n" style="padding-right:6px;">2</td><td></td><td class="f"><a>PHYSICS</a></td><td class="n">1,564</td><td class="n">19,781</td><td class="n">12.65</td><td><div class="bar"><b style="width:55px;"></b><span>13</span></div></td></tr>
   <tr style="height:26px;"><td class="n" style="padding-right:6px;">3</td><td></td><td class="f"><a>ENGINEERING</a></td><td class="n">982</td><td class="n">14,887</td><td class="n">15.16</td><td><div class="bar"><b style="width:98px;"></b><span class="w">23</span></div></td></tr>
   <tr style="height:34px;"><td class="n" style="padding-right:6px;">4</td><td></td><td class="f"><a>MATERIALS<br>SCIENCE</a></td><td class="n">557</td><td class="n">11,924</td><td class="n">21.41</td><td><div class="bar"><b style="width:21px;"></b><span>5</span></div></td></tr>
   <tr style="height:34px;"><td class="n" style="padding-right:6px;">5</td><td></td><td class="f"><a>COMPUTER<br>SCIENCE</a></td><td class="n">761</td><td class="n">10,054</td><td class="n">13.21</td><td><div class="bar"><b style="width:55px;"></b><span>13</span></div></td></tr>
   <tr style="height:26px;"><td class="n" style="padding-right:6px;">0</td><td></td><td class="f"><a>ALL FIELDS</a></td><td class="n">8,823</td><td class="n">122,463</td><td class="n">13.88</td><td><div class="bar"><b style="width:98px;"></b><span class="w">95</span></div></td></tr>
  </table>
 </div>
</div>
</body>
</html>
